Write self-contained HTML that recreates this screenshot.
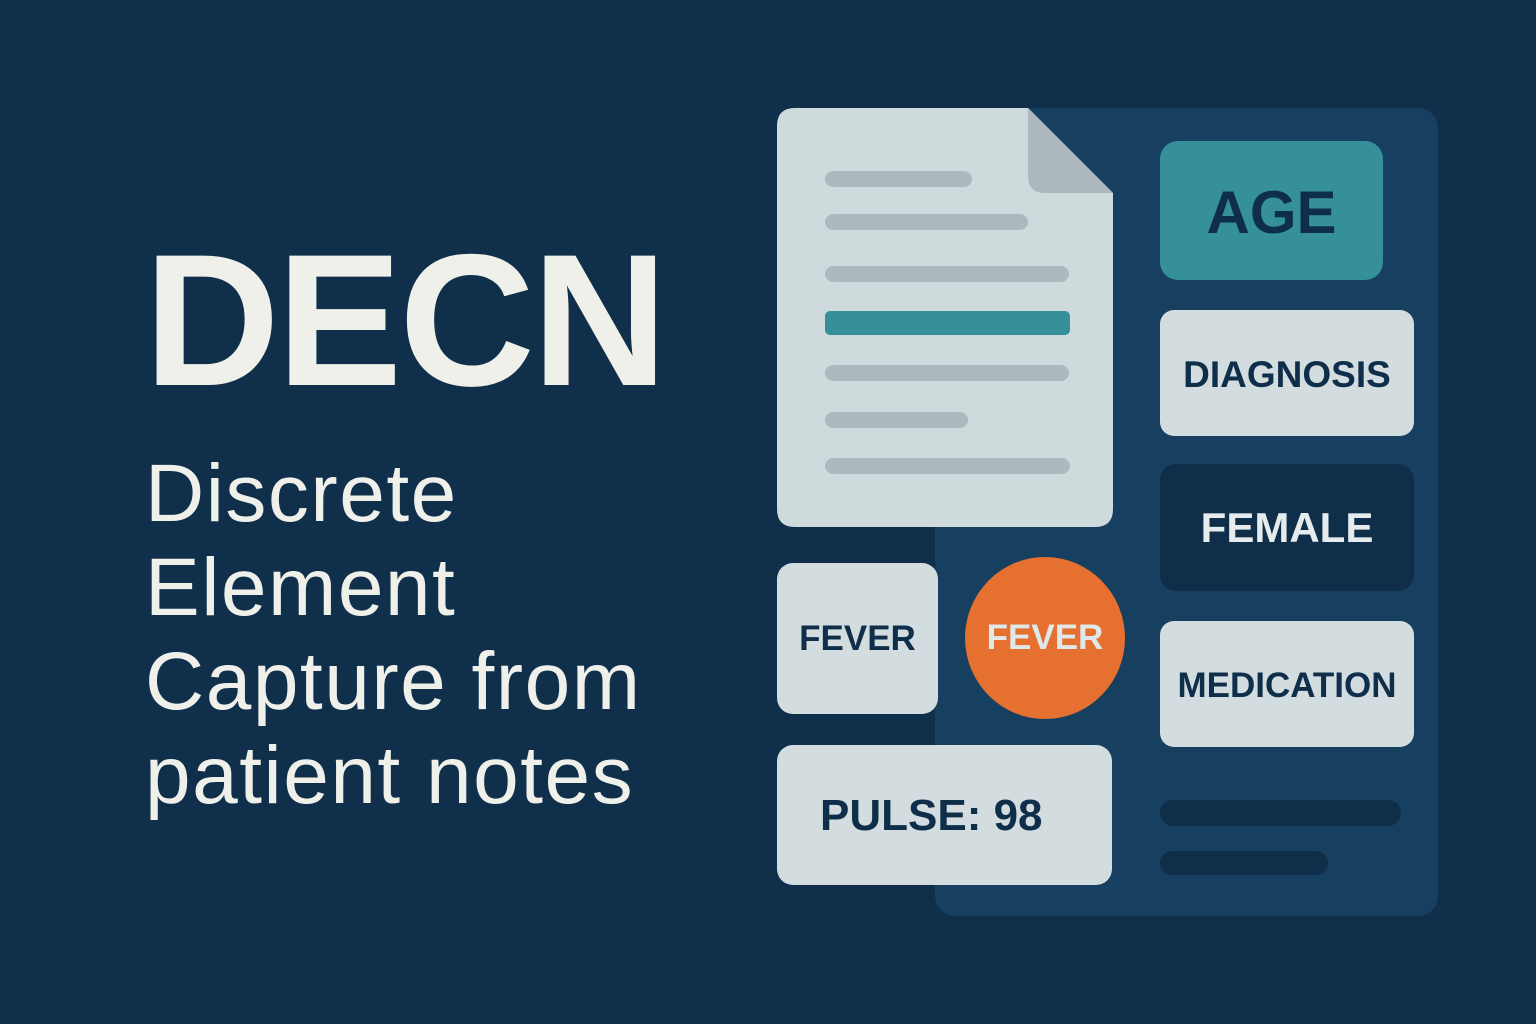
<!DOCTYPE html>
<html><head><style>
*{margin:0;padding:0;box-sizing:border-box}
body{width:1536px;height:1024px;background:#0f2f4b;position:relative;overflow:hidden;font-family:"Liberation Sans",sans-serif}
.a{position:absolute}
.t{position:absolute;display:flex;align-items:center;justify-content:center;font-weight:bold;color:#0f2e4a;white-space:nowrap}
.l{position:absolute;left:825px;height:16px;border-radius:8px;background:#adb9bf}
</style></head><body>
<div class="a" style="left:144px;top:226px;font-size:188px;font-weight:bold;color:#f0f0eb;letter-spacing:-3px;line-height:1">DECN</div>
<div class="a" style="left:145px;top:447px;font-size:82px;color:#f0f0eb;line-height:94px;letter-spacing:1.5px">Discrete<br>Element<br>Capture from<br>patient notes</div>

<div class="a" style="left:935px;top:108px;width:503px;height:808px;background:#173f5f;border-radius:20px"></div>

<svg class="a" style="left:777px;top:108px" width="336" height="420">
<path d="M18 0 H251 L336 85 V401 Q336 419 318 419 H18 Q0 419 0 401 V18 Q0 0 18 0Z" fill="#cfdadd"/>
<path d="M251 0 L336 85 H268 Q251 85 251 68Z" fill="#adb9bf"/>
</svg>
<div class="l" style="top:171px;width:147px"></div>
<div class="l" style="top:214px;width:203px"></div>
<div class="l" style="top:266px;width:244px"></div>
<div class="l" style="top:311px;width:245px;height:24px;border-radius:5px;background:#35909a"></div>
<div class="l" style="top:365px;width:244px"></div>
<div class="l" style="top:412px;width:143px"></div>
<div class="l" style="top:458px;width:245px"></div>

<div class="t" style="left:1160px;top:141px;width:223px;height:139px;background:#35909a;border-radius:18px;font-size:60px;padding-top:4px">AGE</div>
<div class="t" style="left:1160px;top:310px;width:254px;height:126px;background:#d3dde0;border-radius:14px;font-size:37px;padding-top:4px">DIAGNOSIS</div>
<div class="t" style="left:1160px;top:464px;width:254px;height:127px;background:#0f2e4a;border-radius:16px;font-size:42px;color:#e6ecee">FEMALE</div>
<div class="t" style="left:1160px;top:621px;width:254px;height:126px;background:#d3dde0;border-radius:14px;font-size:35px;padding-top:4px">MEDICATION</div>
<div class="a" style="left:1160px;top:800px;width:241px;height:26px;border-radius:13px;background:#0f2e4a"></div>
<div class="a" style="left:1160px;top:851px;width:168px;height:24px;border-radius:12px;background:#0f2e4a"></div>

<div class="t" style="left:777px;top:563px;width:161px;height:151px;background:#d3dde0;border-radius:16px;font-size:35px">FEVER</div>
<div class="t" style="left:965px;top:557px;width:160px;height:162px;background:#e57030;border-radius:50%;font-size:35px;color:#dfe8ea">FEVER</div>
<div class="t" style="left:777px;top:745px;width:335px;height:140px;background:#d3dde0;border-radius:16px;font-size:44px;justify-content:flex-start;padding-left:43px;padding-top:2px">PULSE: 98</div>
</body></html>
